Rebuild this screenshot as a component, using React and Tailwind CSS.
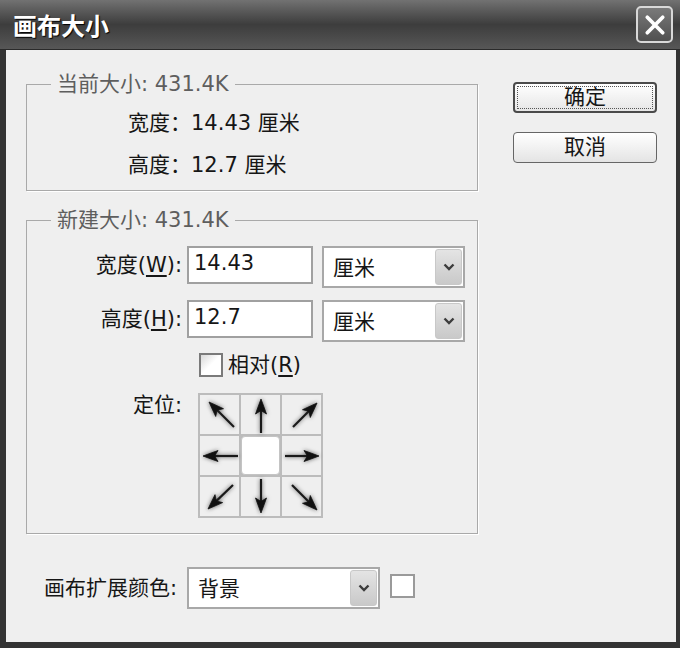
import React from 'react';

// ── Anchor grid arrows (cell-local coords, 39x39 cells) ─────────────────────
const ANCHORS = [
  { tip: [9, 7], tail: [34, 32] },
  { tip: [20, 4], tail: [20, 38] },
  { tip: [35, 8], tail: [11, 32] },
  { tip: [3, 20], tail: [38, 20] },
  null,
  { tip: [37, 20], tail: [3, 20] },
  { tip: [8, 32], tail: [33, 8] },
  { tip: [20, 36], tail: [20, 2] },
  { tip: [35, 33], tail: [10, 8] },
];

function Arrow({ tip, tail }) {
  const [tx, ty] = tip;
  const [bx, by] = tail;
  const len = Math.hypot(tx - bx, ty - by);
  const ux = (tx - bx) / len;
  const uy = (ty - by) / len;
  const hl = 15;
  const hw = 5.5;
  const cx = tx - ux * hl;
  const cy = ty - uy * hl;
  const pts = `${tx},${ty} ${cx - uy * hw},${cy + ux * hw} ${cx + ux * 3.5},${cy + uy * 3.5} ${cx + uy * hw},${cy - ux * hw}`;
  return (
    <svg viewBox="0 0 39 39" className="w-full h-full drop-shadow-[0_0_2px_rgba(0,0,0,0.6)]">
      <line x1={bx} y1={by} x2={cx + ux * 4} y2={cy + uy * 4} stroke="#1a1a1a" strokeWidth="2.2" />
      <polygon points={pts} fill="#111" stroke="#111" strokeWidth="0.8" strokeLinejoin="round" />
    </svg>
  );
}

function Chevron() {
  return (
    <svg viewBox="0 0 12 8" className="w-[12px] h-[8px]">
      <path d="M1.5 1.5 L6 6 L10.5 1.5" fill="none" stroke="#3c3c3c" strokeWidth="2.4" />
    </svg>
  );
}

function Select({ value, className }) {
  return (
    <div className={`flex items-center border-2 border-[#a8a8a8] bg-white ${className}`}>
      <span className="pl-[9px] pt-[2px] leading-[24px]">{value}</span>
      <div className="ml-auto mr-[1px] w-[27px] h-[36px] rounded-[3px] border border-[#c8c8c8] bg-gradient-to-b from-[#e4e4e4] to-[#c9c9c9] flex items-center justify-center">
        <Chevron />
      </div>
    </div>
  );
}

function Input({ value }) {
  return (
    <div className="w-[126px] h-[38px] border-2 border-[#a0a0a0] bg-white flex items-center pl-[5px] pb-[3px]">
      {value}
    </div>
  );
}

export default function App() {
  return (
    <div className="w-[680px] h-[648px] flex flex-col bg-[#2e2e2e] overflow-hidden text-[21px] text-[#161616] font-['DejaVu_Sans','Noto_Sans_CJK_SC',sans-serif]">
      {/* Title bar */}
      <div className="h-[50px] shrink-0 flex items-center justify-between pl-[13px] pr-[7px] bg-gradient-to-b from-[#727272] via-[#3d3d3d] to-[#575757] border-b border-[#2a2a2a]">
        <span className="text-[24px] font-bold text-white leading-none [text-shadow:1px_1px_1px_#000] font-['Noto_Sans_CJK_SC',sans-serif]">
          画布大小
        </span>
        <div className="w-[37px] h-[37px] rounded-[5px] border-2 border-[#d8d8d8] bg-gradient-to-b from-[#7a7a7a] to-[#505050] flex items-center justify-center">
          <svg viewBox="0 0 20 20" className="w-[22px] h-[22px]">
            <path d="M3 3 L17 17 M17 3 L3 17" stroke="#fff" strokeWidth="3.4" strokeLinecap="round" />
          </svg>
        </div>
      </div>

      {/* Body */}
      <div className="flex-1 flex bg-[#efefef] border-l-[6px] border-r-[4px] border-b-[6px] border-[#333] pl-[20px] pt-[22px]">
        <div className="w-[452px] shrink-0">
          {/* Current size */}
          <fieldset className="border border-[#a9a9a9] shadow-[1px_1px_0_#fff] px-[24px] pt-[15px] pb-[13px]">
            <legend className="px-[6px] leading-[24px] text-[#5e5e5e]">当前大小: 431.4K</legend>
            <div className="pl-[77px] leading-[24px]">宽度：14.43 厘米</div>
            <div className="pl-[77px] leading-[24px] mt-[18px]">高度：12.7 厘米</div>
          </fieldset>

          {/* New size */}
          <fieldset className="mt-[17px] border border-[#a9a9a9] shadow-[1px_1px_0_#fff] pl-[24px] pr-[12px] pt-[14px] pb-[15px]">
            <legend className="px-[6px] leading-[24px] text-[#5e5e5e]">新建大小: 431.4K</legend>

            <div className="flex items-start">
              <span className="w-[131px] text-right leading-[38px]">
                宽度(<span className="underline underline-offset-3">W</span>):
              </span>
              <div className="ml-[5px]"><Input value="14.43" /></div>
              <Select value="厘米" className="ml-[9px] w-[143px] h-[42px]" />
            </div>

            <div className="flex items-start mt-[12px]">
              <span className="w-[131px] text-right leading-[38px]">
                高度(<span className="underline underline-offset-3">H</span>):
              </span>
              <div className="ml-[5px]"><Input value="12.7" /></div>
              <Select value="厘米" className="ml-[9px] w-[143px] h-[42px]" />
            </div>

            <div className="flex items-center mt-[11px] ml-[148px]">
              <div className="w-[24px] h-[24px] border-2 border-[#7a7a7a] bg-gradient-to-br from-[#d9d9d9] via-white to-white" />
              <span className="ml-[5px] leading-[24px]">
                相对(<span className="underline underline-offset-3">R</span>)
              </span>
            </div>

            <div className="flex items-start mt-[16px]">
              <span className="w-[131px] text-right leading-[24px]">定位:</span>
              <div className="ml-[16px] grid grid-cols-[39px_39px_39px] grid-rows-[39px_39px_39px] gap-[2px] p-[2px] bg-[#bcbcbc]">
                {ANCHORS.map((a, i) =>
                  a ? (
                    <div key={i} className="bg-[#efefef]">
                      <Arrow tip={a.tip} tail={a.tail} />
                    </div>
                  ) : (
                    <div key={i} className="bg-white rounded-[4px] border border-[#c4c4c4]" />
                  )
                )}
              </div>
            </div>
          </fieldset>

          {/* Canvas extension colour */}
          <div className="flex items-start mt-[33px]">
            <span className="w-[161px] pr-[10px] text-right leading-[42px]">画布扩展颜色:</span>
            <Select value="背景" className="w-[193px] h-[42px]" />
            <div className="ml-[10px] mt-[7px] w-[25px] h-[24px] border-2 border-[#9a9a9a] bg-white" />
          </div>
        </div>

        {/* Buttons */}
        <div className="ml-[35px] mt-[10px] w-[144px] flex flex-col">
          <div className="h-[31px] rounded-[4px] border-2 border-[#4a4a4a] bg-gradient-to-b from-white to-[#e6e6e6] p-[2px]">
            <div className="h-full border border-dotted border-[#555] flex items-center justify-center leading-none">
              确定
            </div>
          </div>
          <div className="mt-[19px] h-[31px] rounded-[4px] border border-[#666] bg-gradient-to-b from-white to-[#e4e4e4] flex items-center justify-center leading-none">
            取消
          </div>
        </div>
      </div>
    </div>
  );
}
